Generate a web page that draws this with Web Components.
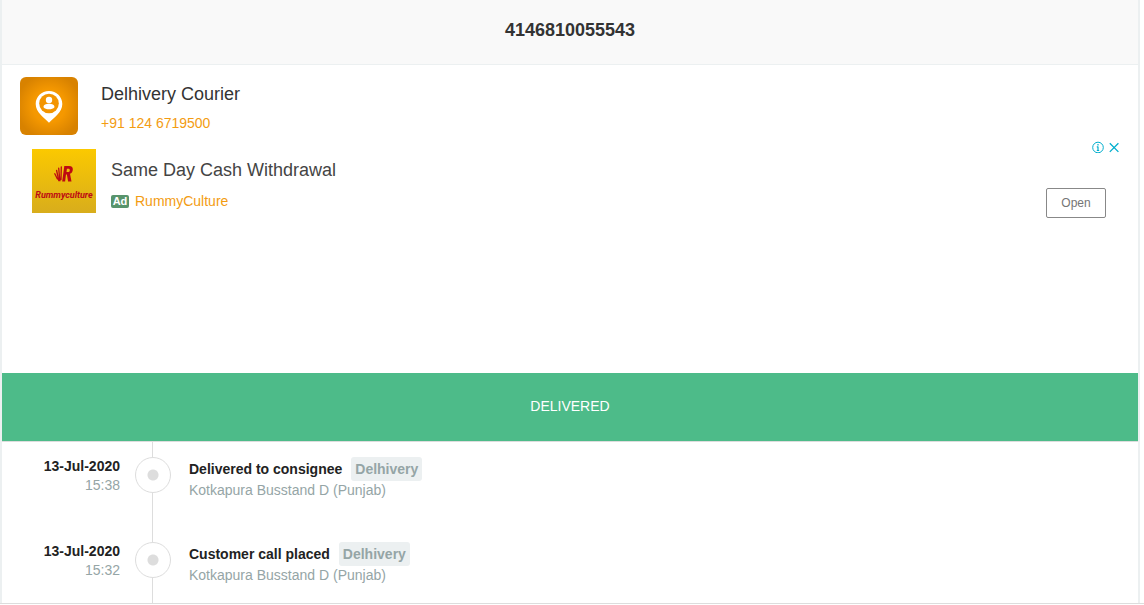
<!DOCTYPE html>
<html lang="en">
<head>
<meta charset="utf-8">
<title>4146810055543</title>
<style>
body { margin: 0; background: #fff; color: #333; font: 14px/20px "Liberation Sans", Arial, sans-serif; }
</style>
</head>
<body>
<tracking-page number="4146810055543">
  <courier-card name="Delhivery Courier" phone="+91 124 6719500"></courier-card>
  <sponsor-ad headline="Same Day Cash Withdrawal" advertiser="RummyCulture"></sponsor-ad>
  <delivery-status>DELIVERED</delivery-status>
  <tracking-event date="13-Jul-2020" time="15:38" courier="Delhivery" place="Kotkapura Busstand D (Punjab)">Delivered to consignee</tracking-event>
  <tracking-event date="13-Jul-2020" time="15:32" courier="Delhivery" place="Kotkapura Busstand D (Punjab)">Customer call placed</tracking-event>
</tracking-page>
<script>
class View extends HTMLElement {
  connectedCallback() {
    if (this.shadowRoot) return;
    const at = name => this.getAttribute(name) || '';
    this.attachShadow({ mode: 'open' }).innerHTML =
      `<style>:host,*{box-sizing:border-box}${this.constructor.css}</style>${this.constructor.html(at)}`;
  }
}

customElements.define('tracking-page', class extends View {
  static css = `
    :host { display: block; border-bottom: 1px solid #ddd; }
    main { margin-right: 4px; border: solid #ecf0f1; border-width: 0 2px; }
    header { padding: 20px 0 24px; background: #f9f9f9; border-bottom: 1px solid #ecf0f1; text-align: center; }
    h1 { margin: 0; font-size: 18px; line-height: 20px; }`;
  static html = at => `<main><header><h1>${at('number')}</h1></header><slot></slot></main>`;
});

customElements.define('courier-card', class extends View {
  static css = `
    :host { display: flex; gap: 23px; padding: 12px 18px 0; }
    svg { display: block; flex: none; }
    h2 { margin: 7px 0 9px; font-size: 18px; line-height: 20px; font-weight: 400; }
    a { display: block; color: #f39c12; text-decoration: none; }`;
  static html = at => `
    <svg width="58" height="58" viewBox="0 0 58 58" aria-hidden="true">
      <defs><radialGradient id="g" r=".56"><stop offset=".5" stop-color="#f59800"/><stop offset="1" stop-color="#d88200"/></radialGradient></defs>
      <rect width="58" height="58" rx="6" fill="url(#g)"/>
      <path d="M29 14c-7.500 0-13.300 5.800-13.300 13 0 8.500 8.300 13.500 13.300 18.800 5-5.300 13.300-10.300 13.300-18.800 0-7.200-5.800-13-13.300-13z" fill="#fff"/>
      <circle cx="29" cy="26.500" r="9.800" fill="#f39500"/>
      <circle cx="29" cy="23" r="3.200" fill="#fff"/>
      <path d="M23.500 30.200c0-2.400 2.400-3.400 5.500-3.400s5.500 1 5.500 3.400c-1.200 1.400-3.200 2.100-5.500 2.100s-4.300-.7-5.500-2.100z" fill="#fff"/>
    </svg>
    <div><h2>${at('name')}</h2><a href="tel:+911246719500">${at('phone')}</a></div>`;
});

customElements.define('sponsor-ad', class extends View {
  static css = `
    :host { display: flex; align-items: flex-start; min-height: 238px; padding: 14px 18px 0 30px; }
    .logo { flex: none; display: flex; flex-direction: column; align-items: center; width: 64px; height: 64px;
      padding-top: 16px; background: linear-gradient(#fbc900, #d8ad1c); color: #bd0a12;
      font: italic 700 9px/12px "Roboto", sans-serif; }
    .logo svg { display: block; margin-bottom: 6px; }
    .copy { flex: 1; padding: 11px 0 0 15px; }
    a { color: inherit; text-decoration: none; }
    h2 { margin: 0 0 11px; color: #444; font-size: 18px; line-height: 20px; font-weight: 400; }
    p { display: flex; align-items: center; gap: 6px; margin: 0; color: #f39c12; }
    .tag { width: 18px; border-radius: 2px; background: #58946c; color: #fff; font-size: 11px; font-weight: 700; line-height: 13px; text-align: center; }
    .side { display: flex; flex-direction: column; align-items: flex-end; padding-top: 24px; margin-top: -32px; }
    .choices { display: flex; gap: 4px; }
    .choices button { display: block; width: 12px; height: 12px; padding: 0; border: 0; background: none; }
    .choices svg { display: block; fill: none; stroke: #00aecd; }
    .open { width: 60px; height: 30px; margin: 35px 14px 0 0; padding: 0; border: 1px solid #888; border-radius: 2px;
      background: #fff; color: #757575; font: 12px/20px "Liberation Sans", Arial, sans-serif; }`;
  static html = at => `
    <div class="logo">
      <svg width="20" height="18" viewBox="0 0 20 18" aria-hidden="true">
        <path d="M.8 8.800l2.600 5.200M2.600 5.500l2.200 10M4.700 3.200l1.200 12.600M7.300 1.800L7 14.500" fill="none" stroke="#bd0a12" stroke-width="1.300" stroke-linecap="round"/>
        <path fill-rule="evenodd" d="M10.300 1h4.700c2.900 0 4.100 1.400 3.800 3.900-.3 2-1.200 3.200-2.800 3.900l1.500 7.700h-3.400l-1.200-7h-.9l-.9 7H8.200zM12.900 3.700l-.4 3.400h1.300c1.300 0 1.900-.5 2-1.800.1-1.100-.4-1.600-1.500-1.600z" fill="#bd0a12"/>
      </svg>
      <span>Rummyculture</span>
    </div>
    <div class="copy">
      <h2><a href="#ad">${at('headline')}</a></h2>
      <p><span class="tag">Ad</span><a href="#ad">${at('advertiser')}</a></p>
    </div>
    <div class="side">
      <div class="choices">
        <button aria-label="About this ad"><svg width="12" height="12" viewBox="0 0 12 12"><circle cx="6" cy="6.500" r="5.300"/><path d="M6 3v1.500M6 5.500v4M4.800 5.800H6M4.800 9.500h2.400" stroke-width="1.200"/></svg></button>
        <button aria-label="Close ad"><svg width="12" height="12" viewBox="0 0 12 12"><path d="M1.800 2.300l8.600 8.600M10.400 2.300l-8.600 8.600" stroke-width="1.300"/></svg></button>
      </div>
      <button class="open">Open</button>
    </div>`;
});

customElements.define('delivery-status', class extends View {
  static css = `
    :host { display: block; padding: 23px 0 25px; background: #4dbb89; border-bottom: 1px solid #ddd; color: #fff; text-align: center; }`;
  static html = () => `<slot></slot>`;
});

customElements.define('tracking-event', class extends View {
  static css = `
    :host { display: grid; grid-template-columns: 118px 69px 1fr; color: #95a5a6; --tail: 34px; }
    :host(:last-of-type) { --tail: 25px; }
    time { padding-top: 15px; line-height: 19px; text-align: right; }
    strong { color: #222; }
    time strong { display: block; }
    .rail { display: flex; flex-direction: column; align-items: center; width: 36px; margin-left: 15px; }
    .rail::before, .rail::after { content: ""; width: 1px; margin-right: 1px; background: #ddd; }
    .rail::before { height: 15px; }
    .rail::after { height: var(--tail); }
    .dot { width: 36px; height: 36px; border: 1px solid #ddd; border-radius: 50%; background: radial-gradient(circle, #ddd 5px, #fff 6px); }
    .what { padding-top: 15px; }
    .line { display: flex; align-items: center; gap: 9px; }
    .badge { padding: 2px 4px; border-radius: 3px; background: #ecf0f1; font-weight: 700; }
    .place { line-height: 18px; }`;
  static html = at => `
    <time><strong>${at('date')}</strong>${at('time')}</time>
    <div class="rail"><div class="dot"></div></div>
    <div class="what">
      <div class="line"><strong><slot></slot></strong><span class="badge">${at('courier')}</span></div>
      <div class="place">${at('place')}</div>
    </div>`;
});
</script>
</body>
</html>
